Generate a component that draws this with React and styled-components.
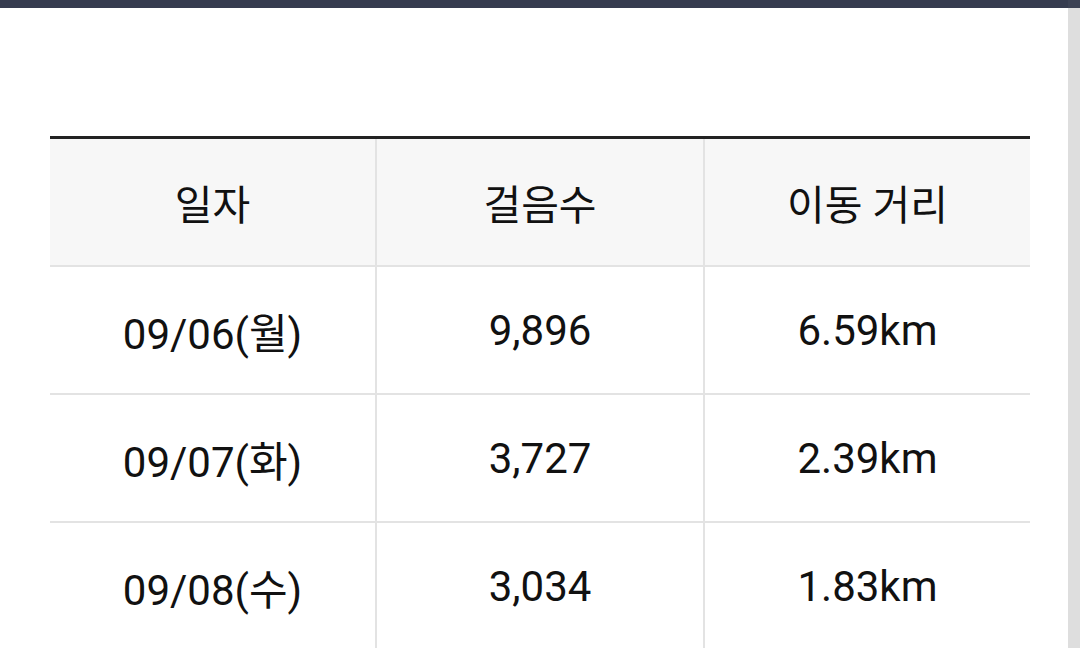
import React from "react";
import styled, { createGlobalStyle } from "styled-components";

const GlobalStyle = createGlobalStyle`
  html, body {
    margin: 0;
    padding: 0;
    background: #ffffff;
    overflow: hidden;
  }
  body {
    font-family: Roboto, "Noto Sans CJK KR", sans-serif;
  }
`;

const Screen = styled.div`
  display: flex;
  width: 1080px;
  height: 648px;
  overflow: hidden;
`;

const Main = styled.div`
  width: 1068px;
  display: flex;
  flex-direction: column;
`;

const TopBar = styled.div`
  flex: none;
  height: 8px;
  background: #363c4f;
`;

const Content = styled.div`
  flex: none;
  padding: 128px 38px 0 50px;
`;

const ScrollTrack = styled.div`
  width: 12px;
  background: #dedede;
  border-top: 8px solid #3c4254;
`;

const Table = styled.table`
  width: 980px;
  border-collapse: collapse;
  table-layout: fixed;
  border-top: 3px solid #222222;
`;

const HeadCell = styled.th`
  height: 126px;
  background: #f7f7f7;
  font-weight: 400;
  font-size: 41px;
  color: #111111;
  text-align: center;
  border-left: 2px solid #e3e3e3;
  border-bottom: 2px solid #e3e3e3;
  padding: 0;
  &:first-child {
    border-left: none;
  }
`;

const Cell = styled.td`
  height: 126px;
  font-size: 42px;
  color: #111111;
  text-align: center;
  border-left: 2px solid #e3e3e3;
  border-bottom: 2px solid #e3e3e3;
  padding: 0;
  &:first-child {
    border-left: none;
  }
`;

const rows = [
  { date: "09/06(월)", steps: "9,896", dist: "6.59km" },
  { date: "09/07(화)", steps: "3,727", dist: "2.39km" },
  { date: "09/08(수)", steps: "3,034", dist: "1.83km" },
];

function App() {
  return (
    <>
      <GlobalStyle />
      <Screen>
        <Main>
          <TopBar />
          <Content>
            <Table>
              <colgroup>
                <col style={{ width: 326 }} />
                <col style={{ width: 328 }} />
                <col style={{ width: 326 }} />
              </colgroup>
              <thead>
                <tr>
                  <HeadCell>일자</HeadCell>
                  <HeadCell>걸음수</HeadCell>
                  <HeadCell>이동 거리</HeadCell>
                </tr>
              </thead>
              <tbody>
                {rows.map((r) => (
                  <tr key={r.date}>
                    <Cell>{r.date}</Cell>
                    <Cell>{r.steps}</Cell>
                    <Cell>{r.dist}</Cell>
                  </tr>
                ))}
              </tbody>
            </Table>
          </Content>
        </Main>
        <ScrollTrack />
      </Screen>
    </>
  );
}

export default App;
